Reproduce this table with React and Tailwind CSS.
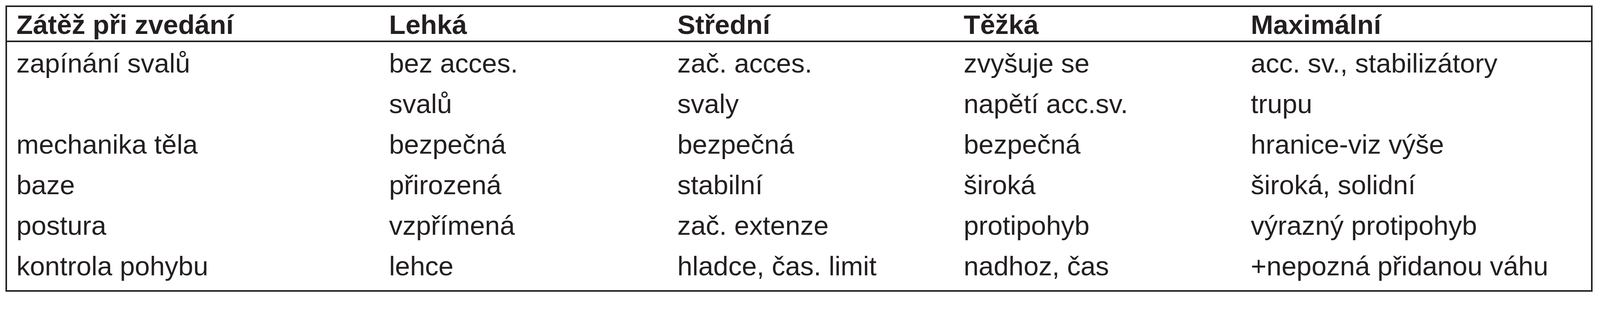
const columns = ["Zátěž při zvedání", "Lehká", "Střední", "Těžká", "Maximální"];

const rows = [
  ["zapínání svalů", "bez acces.", "zač. acces.", "zvyšuje se", "acc. sv., stabilizátory"],
  ["", "svalů", "svaly", "napětí acc.sv.", "trupu"],
  ["mechanika těla", "bezpečná", "bezpečná", "bezpečná", "hranice-viz výše"],
  ["baze", "přirozená", "stabilní", "široká", "široká, solidní"],
  ["postura", "vzpřímená", "zač. extenze", "protipohyb", "výrazný protipohyb"],
  ["kontrola pohybu", "lehce", "hladce, čas. limit", "nadhoz, čas", "+nepozná přidanou váhu"],
];

export default function App() {
  return (
    <div
      className="w-full min-h-[770px] bg-white pt-[14px] pl-[14px] text-[#231f20]"
      style={{ fontFamily: '"Liberation Sans", Arial, sans-serif' }}
    >
      <div className="w-[4063px] border-4 border-[#231f20]">
        {/* header */}
        <div className="grid grid-cols-[954px_738px_733px_735px_1fr] h-[90px] border-b-4 border-[#231f20] pt-[1px]">
          {columns.map((c) => (
            <div key={c} className="pl-[24px] text-[69px] font-bold leading-[89px] whitespace-nowrap">
              {c}
            </div>
          ))}
        </div>

        {/* body */}
        <div className="pt-[3px] pb-[9px]">
          {rows.map((r, i) => (
            <div key={i} className="grid grid-cols-[954px_738px_733px_735px_1fr] h-[104px]">
              {r.map((cell, j) => (
                <div key={j} className="pl-[24px] text-[69px] leading-[104px] whitespace-nowrap">
                  {cell}
                </div>
              ))}
            </div>
          ))}
        </div>
      </div>
    </div>
  );
}
